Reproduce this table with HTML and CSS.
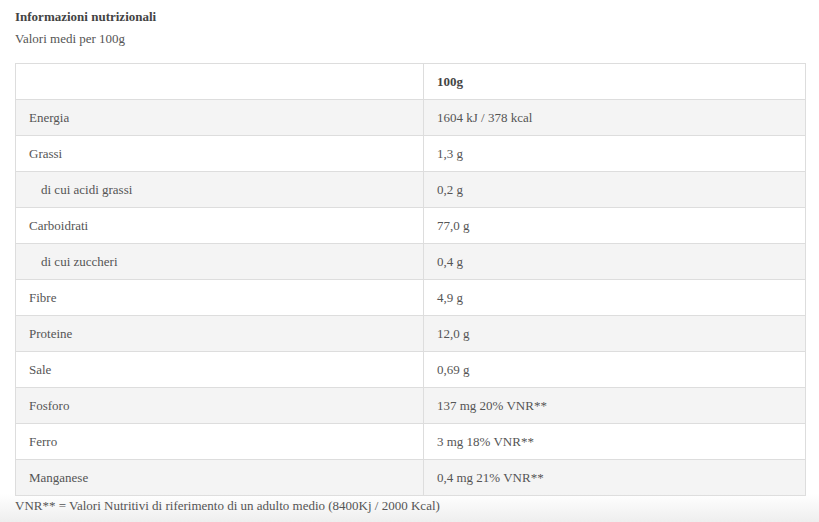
FILE: index.html
```html
<!DOCTYPE html>
<html lang="it">
<head>
<meta charset="utf-8">
<title>Informazioni nutrizionali</title>
<link rel="stylesheet" href="styles.css">
</head>
<body>
<div class="page">
  <h3 class="title">Informazioni nutrizionali</h3>
  <p class="subtitle">Valori medi per 100g</p>
  <table class="nutri">
    <colgroup><col class="c1"><col class="c2"></colgroup>
    <thead>
      <tr><th></th><th>100g</th></tr>
    </thead>
    <tbody>
      <tr><td>Energia</td><td>1604 kJ / 378 kcal</td></tr>
      <tr><td>Grassi</td><td>1,3 g</td></tr>
      <tr><td class="sub">di cui acidi grassi</td><td>0,2 g</td></tr>
      <tr><td>Carboidrati</td><td>77,0 g</td></tr>
      <tr><td class="sub">di cui zuccheri</td><td>0,4 g</td></tr>
      <tr><td>Fibre</td><td>4,9 g</td></tr>
      <tr><td>Proteine</td><td>12,0 g</td></tr>
      <tr><td>Sale</td><td>0,69 g</td></tr>
      <tr><td>Fosforo</td><td>137 mg 20% VNR**</td></tr>
      <tr><td>Ferro</td><td>3 mg 18% VNR**</td></tr>
      <tr><td>Manganese</td><td>0,4 mg 21% VNR**</td></tr>
    </tbody>
  </table>
  <p class="note">VNR** = Valori Nutritivi di riferimento di un adulto medio (8400Kj / 2000 Kcal)</p>
</div>
<div class="fade"></div>
</body>
</html>
```
FILE: styles.css
```css
html, body {
  margin: 0;
  padding: 0;
  background: #fff;
}
body {
  font-family: "Liberation Serif", "DejaVu Serif", serif;
  font-size: 13px;
  color: #555;
  position: relative;
  height: 522px;
  overflow: hidden;
}
.page {
  padding: 8px 14px 0 15px;
}
.title {
  margin: 0;
  font-size: 13px;
  font-weight: bold;
  color: #444;
  line-height: 18px;
}
.subtitle {
  margin: 4px 0 0;
  line-height: 18px;
}
.nutri {
  margin-top: 15px;
  width: 791px;
  table-layout: fixed;
  border-collapse: collapse;
  border: 1px solid #ddd;
}
.nutri .c1 {
  width: 408px;
}
.nutri th, .nutri td {
  height: 35px;
  padding: 0 13px;
  border-top: 1px solid #ddd;
  text-align: left;
  vertical-align: middle;
  line-height: 16px;
}
.nutri th {
  font-weight: bold;
  color: #444;
}
.nutri th:first-child, .nutri td:first-child {
  border-right: 1px solid #ddd;
}
.nutri tbody tr:nth-child(odd) {
  background: #f4f4f4;
}
.nutri td.sub {
  padding-left: 25px;
}
.note {
  margin: 2px 0 0;
  line-height: 16px;
  position: relative;
  z-index: 1;
}
.fade {
  position: absolute;
  left: 0;
  right: 0;
  bottom: 0;
  height: 28px;
  background: linear-gradient(to bottom, rgba(240,240,240,0), rgba(238,238,238,1));
}
```
